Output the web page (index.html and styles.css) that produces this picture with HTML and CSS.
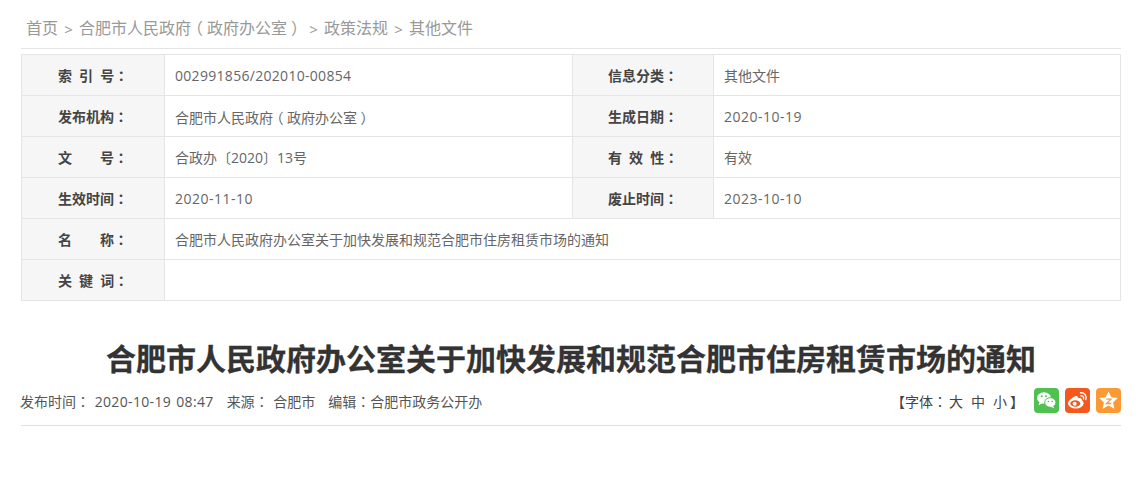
FILE: index.html
```html
<!DOCTYPE html>
<html lang="zh-CN">
<head>
<meta charset="utf-8">
<title>合肥市人民政府办公室关于加快发展和规范合肥市住房租赁市场的通知</title>
<link rel="stylesheet" href="styles.css">
</head>
<body>
<div class="page">
  <nav class="crumbs">
    <a>首页</a><span class="sep">&gt;</span><a>合肥市人民政府<span class="paren">（</span>政府办公室<span class="paren">）</span></a><span class="sep">&gt;</span><a>政策法规</a><span class="sep">&gt;</span><a>其他文件</a>
  </nav>
  <table class="info">
    <colgroup><col class="c1"><col class="c2"><col class="c3"><col class="c4"></colgroup>
    <tr><th>索 引 号<span class="p">：</span></th><td><span class="num long">002991856/202010-00854</span></td><th class="th2">信息分类<span class="p">：</span></th><td>其他文件</td></tr>
    <tr><th>发布机构<span class="p">：</span></th><td>合肥市人民政府<span class="paren">（</span>政府办公室<span class="paren">）</span></td><th class="th2">生成日期<span class="p">：</span></th><td><span class="num">2020-10-19</span></td></tr>
    <tr><th>文　　号<span class="p">：</span></th><td>合政办〔2020〕13号</td><th class="th2">有 效 性<span class="p">：</span></th><td>有效</td></tr>
    <tr><th>生效时间<span class="p">：</span></th><td><span class="num">2020-11-10</span></td><th class="th2">废止时间<span class="p">：</span></th><td><span class="num">2023-10-10</span></td></tr>
    <tr><th>名　　称<span class="p">：</span></th><td colspan="3">合肥市人民政府办公室关于加快发展和规范合肥市住房租赁市场的通知</td></tr>
    <tr><th>关 键 词<span class="p">：</span></th><td colspan="3"></td></tr>
  </table>
  <h1 class="title">合肥市人民政府办公室关于加快发展和规范合肥市住房租赁市场的通知</h1>
  <div class="meta">
    <div class="meta-left">
      <span>发布时间<span class="p">：</span> <span class="num">2020-10-19 08:47</span></span>
      <span>来源<span class="p">：</span> 合肥市</span>
      <span>编辑<span class="p">：</span>合肥市政务公开办</span>
    </div>
    <div class="meta-right">
      <span class="fontsize">【字体<span class="p">：</span><a class="fs-big">大</a><a class="fs-item">中</a><a class="fs-item">小</a><span class="fs-end">】</span></span>
      <a class="share wx" aria-label="微信">
        <svg viewBox="0 0 25 25" width="25" height="25"><ellipse cx="10" cy="10" rx="7" ry="5.800" fill="#fff"/><path d="M5.500 14l-1 3.200 3.800-2z" fill="#fff"/><ellipse cx="16.300" cy="14.500" rx="5.600" ry="4.800" fill="#fff" stroke="#4fc14f" stroke-width="1"/><path d="M19 18l1.500 2.500-3.800-1.800z" fill="#fff"/><circle cx="7.800" cy="8.300" r="1" fill="#4fc14f"/><circle cx="12" cy="8.300" r="1" fill="#4fc14f"/><circle cx="14.400" cy="13.500" r=".8" fill="#4fc14f"/><circle cx="18.200" cy="13.500" r=".8" fill="#4fc14f"/></svg>
      </a>
      <a class="share wb" aria-label="微博">
        <svg viewBox="0 0 25 25" width="25" height="25"><ellipse cx="10.800" cy="15.300" rx="7.800" ry="5.200" fill="#fff"/><path d="M4 14.500c2-4.500 7-7.500 8.500-6 .7.800.2 2 .2 2 3-1 4.500 0 3.800 2.500z" fill="#fff"/><ellipse cx="10.300" cy="15.500" rx="5" ry="3.300" fill="#f4581c"/><circle cx="9.600" cy="15.800" r="2" fill="#fff"/><path d="M15.500 4.800c3.800-.5 6.500 2.800 5.300 6.700M15.800 7.800c1.900-.2 3.300 1.300 2.700 3.200" fill="none" stroke="#fff" stroke-width="1.400" stroke-linecap="round"/></svg>
      </a>
      <a class="share qz" aria-label="QQ空间">
        <svg viewBox="0 0 25 25" width="25" height="25"><path d="M12.500 3.500l2.900 5.700 6.300.9-4.600 4.300 1.200 6.300-5.800-3.100-5.800 3.100 1.200-6.300-4.600-4.300 6.300-.9z" fill="#fff"/><path d="M10.300 11.200h4.600l-4.400 4.300h4.800" fill="none" stroke="#fb9a34" stroke-width="1.300"/></svg>
      </a>
    </div>
  </div>
</div>
</body>
</html>
```

FILE: styles.css
```css
* { box-sizing: border-box; }
html, body { margin: 0; padding: 0; background: #fff; }
body {
  font-family: "Noto Sans CJK SC", "Open Sans", sans-serif;
  color: #666;
  font-size: 14px;
}
.page { width: 1100px; margin-left: 21px; }
.p { font-family: "Noto Sans CJK TC", sans-serif; font-feature-settings: "locl" 0; }
.paren { font-family: "Noto Sans CJK SC", sans-serif; font-feature-settings: "halt"; padding: 0 .25em; }
.num { letter-spacing: .5px; }
.num.long { letter-spacing: .3px; }
.crumbs {
  height: 32px;
  margin-top: 17px;
  padding-left: 5px;
  border-bottom: 1px solid #e5e5e5;
  font-size: 16px;
  line-height: 20px;
  color: #999;
  white-space: nowrap;
  display: flex;
  align-items: flex-start;
}
.sep { width: 21px; padding-top: 2px; text-align: center; font-family: "Open Sans", sans-serif; font-size: 15px; }
.info {
  width: 1099px;
  margin-top: 5px;
  border-collapse: collapse;
  table-layout: fixed;
}
.c1 { width: 143px; }
.c2 { width: 408px; }
.c3 { width: 141px; }
.c4 { width: 407px; }
.info tr { height: 41px; }
.info th, .info td {
  border: 1px solid #e5e5e5;
  padding: 0;
  font-size: 14px;
  line-height: 20px;
  white-space: nowrap;
}
.info th {
  background: #f6f6f6;
  color: #444;
  font-weight: 700;
  text-align: left;
  padding-left: 36px;
  word-spacing: 3.900px;
}
.info td { padding: 2px 0 0 10px; font-family: "Open Sans", "Noto Sans CJK SC", sans-serif; }
.info .th2 { padding-left: 35px; }
.title {
  margin: 38px 0 0;
  text-align: center;
  font-size: 30px;
  line-height: 36px;
  font-weight: 700;
  color: #333;
  -webkit-text-stroke: .3px #333;
}
.meta {
  margin-top: 13px;
  height: 38px;
  padding-bottom: 13px;
  border-bottom: 1px solid #e0e0e0;
  display: flex;
  justify-content: space-between;
  align-items: center;
  font-family: "Open Sans", "Noto Sans CJK SC", sans-serif;
  font-size: 14px;
  color: #555;
  white-space: nowrap;
}
.meta .num { letter-spacing: .35px; }
.meta-left { display: flex; gap: 13px; margin-left: -1px; padding-top: 2px; word-spacing: 1px; }
.meta-right { display: flex; align-items: center; gap: 6px; }
.fontsize { margin-right: 4px; padding-top: 2px; color: #444; }
.fs-big { margin-left: 2px; }
.fs-item { margin-left: 8px; }
.fs-end { margin-left: 3px; }
.share { display: block; width: 25px; height: 25px; border-radius: 4px; }
.share svg { display: block; }
.wx { background: #4fc14f; }
.wb { background: #f4581c; }
.qz { background: #fb9a34; }
```
